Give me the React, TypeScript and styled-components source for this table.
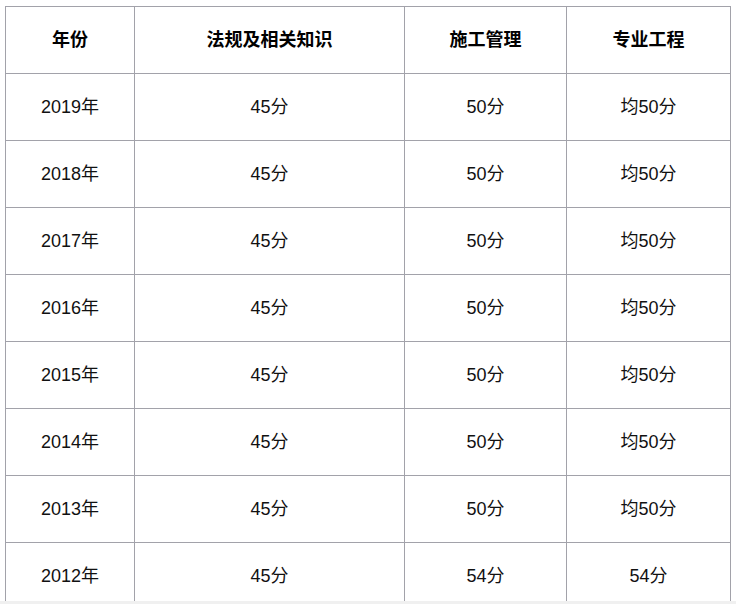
import React from 'react';
import styled, { createGlobalStyle } from 'styled-components';

const GlobalStyle = createGlobalStyle`
  html, body {
    margin: 0;
    padding: 0;
    background: #f0f0f0;
  }
`;

const Page = styled.div`
  height: 601px;
  overflow: hidden;
  background: #ffffff;
  padding: 6px 0 0 5px;
  box-sizing: border-box;
`;

const Table = styled.table`
  border-collapse: collapse;
  table-layout: fixed;
  width: 726px;
  font-family: "Liberation Sans", Arial, "Noto Sans CJK SC", sans-serif;
  font-size: 18px;
  color: #111;
`;

const Cell = styled.td<{ $head?: boolean }>`
  border: 1px solid #a2a2aa;
  height: 62px;
  padding: 0 0 4px;
  text-align: center;
  vertical-align: middle;
  font-weight: ${p => (p.$head ? 'bold' : 'normal')};
  color: ${p => (p.$head ? '#000' : '#111')};
`;

const columns = ['年份', '法规及相关知识', '施工管理', '专业工程'];
const widths = [129, 270, 162, 164];

const rows = [
  ['2019年', '45分', '50分', '均50分'],
  ['2018年', '45分', '50分', '均50分'],
  ['2017年', '45分', '50分', '均50分'],
  ['2016年', '45分', '50分', '均50分'],
  ['2015年', '45分', '50分', '均50分'],
  ['2014年', '45分', '50分', '均50分'],
  ['2013年', '45分', '50分', '均50分'],
  ['2012年', '45分', '54分', '54分'],
];

const App: React.FC = () => (
  <>
    <GlobalStyle />
    <Page>
      <Table>
        <colgroup>
          {widths.map((w, i) => (
            <col key={i} style={{ width: w }} />
          ))}
        </colgroup>
        <tbody>
          <tr>
            {columns.map(c => (
              <Cell key={c} $head>{c}</Cell>
            ))}
          </tr>
          {rows.map(r => (
            <tr key={r[0]}>
              {r.map((v, i) => (
                <Cell key={i}>{v}</Cell>
              ))}
            </tr>
          ))}
        </tbody>
      </Table>
    </Page>
  </>
);

export default App;
